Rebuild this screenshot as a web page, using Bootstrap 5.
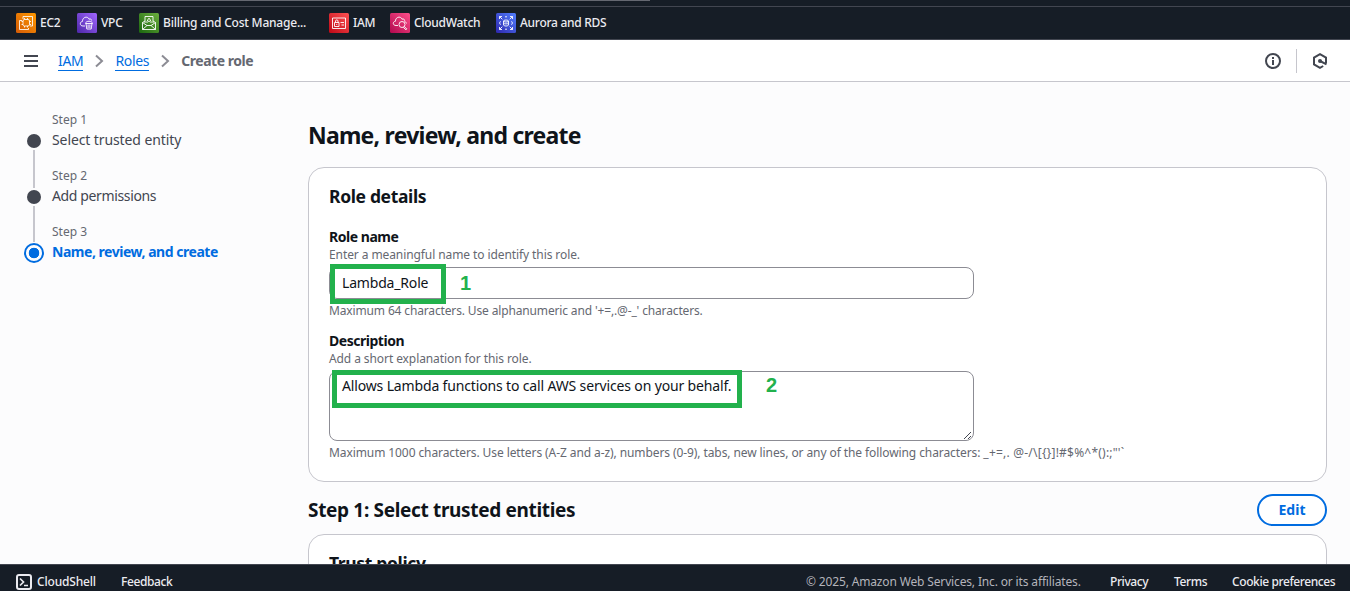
<!DOCTYPE html>
<html lang="en">
<head>
<meta charset="utf-8">
<title>Create role | IAM</title>
<meta name="viewport" content="width=device-width, initial-scale=1">
<link href="https://cdn.jsdelivr.net/npm/bootstrap@5.3.0/dist/css/bootstrap.min.css" rel="stylesheet">
<style>
body{font-family:"Noto Sans","Open Sans",sans-serif;font-size:14px;line-height:20px;color:#0f141a;background:#fcfcfd;height:591px;overflow:hidden}
h1,h2,h3{margin:0;font-weight:700;color:#0f141a}
.topstrip{height:7px;background:#161d26;border-bottom:1px solid #424650}
.searchedge{width:530px;height:1px;margin-left:120px;background:#656871}
.favbar{height:33px;background:#161d26;border-bottom:1px solid #424650;padding-left:16px;color:#ebebf0;font-size:12px;font-weight:500;line-height:16px}
.favbar a,.footbar a{color:inherit;text-decoration:none;white-space:nowrap}
.favbar svg{width:20px;height:20px;margin-right:4px;flex:none}
.favbar a{letter-spacing:-.28px}
.favbar .t-bill{letter-spacing:-.22px}
.crumbbar{height:42px;background:#fff;border-bottom:1px solid #c6c6cd;padding:0 22px 0 24px}
.crumbbar .breadcrumb-link{color:#006ce0;text-decoration:none;border-bottom:1px solid #006ce0;line-height:18px;letter-spacing:-.33px;margin-top:2px}
.crumb-now{color:#656871;font-weight:700;letter-spacing:-.45px;padding-top:1px}
.vrule{width:1px;height:24px;background:#c6c6cd}
.page{height:482px;overflow:hidden}
.steps{width:308px;padding:28px 0 0 24px;flex:none}
.step{display:grid;grid-template-columns:20px 1fr;column-gap:8px;height:56px;grid-template-rows:20px 22px 14px}
.step small{grid-column:2;font-size:12px;line-height:20px;color:#656871}
.step .dot{grid-column:1;grid-row:2;width:14px;height:14px;border-radius:50%;background:#424650;align-self:center;justify-self:center}
.step .name{grid-column:2;grid-row:2;line-height:20px;color:#424650;white-space:nowrap;letter-spacing:-.1px}
.step .name.t-add{letter-spacing:-.37px}
.step .rail{width:2px;background:#c6c6cd;justify-self:center;height:38px;grid-column:1;grid-row:3;margin-top:-2px}
.step.now .name{color:#006ce0;font-weight:700;letter-spacing:-.47px}
.step.now .dot{width:20px;height:20px;border:2px solid #006ce0;background:radial-gradient(circle,#006ce0 5px,#fcfcfd 5.6px)}
.content{width:1019px;flex:none}
h1{font-size:23px;line-height:30px;padding-top:38px;letter-spacing:-.76px}
.panel{background:#fff;border:1px solid #c6c6cd;border-radius:16px;padding:0 20px}
.panel h2{font-size:17.5px;line-height:22px;letter-spacing:-.35px}
h2.sec{font-size:19px;line-height:24px;letter-spacing:-.33px}
.lbl{font-weight:700;line-height:20px;letter-spacing:-.47px}
.hint{font-size:12px;line-height:16px;color:#656871;white-space:nowrap;letter-spacing:-.09px}
.t-max{letter-spacing:-.145px}
.t-sym{letter-spacing:.22px}
.t-desc{letter-spacing:-.15px}
.t-role{letter-spacing:-.18px}
.field{width:645px;border:1px solid #8c8c94;border-radius:8px;padding:5px 12px;background:#fff;position:relative}
.mark-box{position:absolute;border:5px solid #22b14c}
.mark-num{position:absolute;font:700 20px/20px "Liberation Sans",sans-serif;color:#22b14c}
.grip{position:absolute;right:0;bottom:0;width:10px;height:10px}
.editbtn{width:70px;height:32px;border:2px solid #006ce0;border-radius:20px;color:#006ce0;background:#fff;font-weight:700;font-size:14px;padding:0;line-height:20px}
.footbar{height:27px;background:#161d26;border-top:1px solid #424650;color:#ebebf0;font-size:12px;line-height:16px;padding:9px 15px 0 16px;font-weight:500;white-space:nowrap;letter-spacing:-.4px}
.footbar svg{margin-right:5px}
.footbar .t-shell{letter-spacing:-.18px}
.copy{color:#b4b4bb;font-weight:400;letter-spacing:-.15px}
</style>
</head>
<body class="d-flex flex-column">
<header>
  <div class="topstrip"><div class="searchedge"></div></div>
  <nav class="favbar d-flex align-items-center">
    <a href="#" class="d-flex align-items-center" style="width:61px"><svg viewBox="0 0 20 20"><defs><linearGradient id="go" x1="0" y1="1" x2="1" y2="0"><stop stop-color="#d45b07"/><stop offset="1" stop-color="#f90"/></linearGradient></defs><rect width="20" height="20" rx="1.5" fill="url(#go)"/><g fill="none" stroke="#fff" stroke-width=".85"><path d="M7 6V3.500h9.500V13H14M6 7.500H3.500v9h9V15"/><rect x="7" y="6.500" width="6.500" height="6.500" rx="1.500"/><path d="M8.500 5v1.500M11.500 5v1.500M8.500 13v1.500M11.500 13v1.500M13.500 8.500H15M13.500 11.500H15M5.500 8.500H7M5.500 11.500H7"/></g></svg><span>EC2</span></a>
    <a href="#" class="d-flex align-items-center" style="width:62px"><svg viewBox="0 0 20 20"><defs><linearGradient id="gv" x1="0" y1="1" x2="1" y2="0"><stop stop-color="#4d27a8"/><stop offset="1" stop-color="#a166ff"/></linearGradient></defs><rect width="20" height="20" rx="1.500" fill="url(#gv)"/><g fill="none" stroke="#fff" stroke-width=".9"><path d="M8 13H6C2.500 13 2.500 8.800 5.500 8.400 5.300 3.800 11 2.800 12 6.200c1.600-.8 2.600.2 2.700 1.400"/><path d="M9 10.500l.8 5.500h4.400l.8-5.500M11.100 11.500v3.500M12.900 11.500v3.500M8.500 10.500h7c0-3-7-3-7 0z"/></g></svg><span>VPC</span></a>
    <a href="#" class="d-flex align-items-center" style="width:190px"><svg viewBox="0 0 20 20"><defs><linearGradient id="gb" x1="0" y1="1" x2="1" y2="0"><stop stop-color="#1b660f"/><stop offset="1" stop-color="#6cae3e"/></linearGradient></defs><rect width="20" height="20" rx="1.500" fill="url(#gb)"/><g fill="none" stroke="#fff" stroke-width=".9"><path d="M6 10V3.500h8V10M6 8 3.500 9.500v7h13v-7L14 8M3.500 9.500 8 12.500h4l4.500-3M3.500 16.500l4.500-4M16.500 16.500l-4.500-4"/><path d="M8 10V8.500l1.500-3h1l1.500 3V10M9 8.300h2"/></g></svg><span class="t-bill">Billing and Cost Manage...</span></a>
    <a href="#" class="d-flex align-items-center" style="width:61px"><svg viewBox="0 0 20 20"><defs><linearGradient id="gi" x1="0" y1="1" x2="1" y2="0"><stop stop-color="#bd0816"/><stop offset="1" stop-color="#ff5252"/></linearGradient></defs><rect width="20" height="20" rx="1.500" fill="url(#gi)"/><g fill="none" stroke="#fff" stroke-width=".9"><path d="M3.500 5h13v10.500h-13zM5.500 9.500h4.500v4H5.500zM6.500 9.500V8c0-1.500 2.500-1.500 2.500 0v1.500M7.750 11v1M11.500 9.500h3.500M12.500 12h2.500"/></g></svg><span>IAM</span></a>
    <a href="#" class="d-flex align-items-center" style="width:106px"><svg viewBox="0 0 20 20"><defs><linearGradient id="gc" x1="0" y1="1" x2="1" y2="0"><stop stop-color="#b0084d"/><stop offset="1" stop-color="#ff4f8b"/></linearGradient></defs><rect width="20" height="20" rx="1.500" fill="url(#gc)"/><g fill="none" stroke="#fff" stroke-width=".9"><path d="M8 12.500H6C2.500 12.500 2.500 8.500 5.500 8.200 5.300 3.800 11 2.800 12 6.200c1.600-.8 2.600.2 2.700 1.600"/><circle cx="12" cy="11.500" r="3"/><path d="M14.200 13.500l2.600 2.300-.8 1-2.700-2.400M14.500 8.500c1 .2 1.800.8 1.900 2"/></g></svg><span class="t-cw">CloudWatch</span></a>
    <a href="#" class="d-flex align-items-center"><svg viewBox="0 0 20 20"><defs><linearGradient id="gr" x1="0" y1="1" x2="1" y2="0"><stop stop-color="#2e27ad"/><stop offset="1" stop-color="#527fff"/></linearGradient></defs><rect width="20" height="20" rx="1.500" fill="url(#gr)"/><g fill="none" stroke="#fff" stroke-width=".9"><path d="M3.500 6V3.500H6M3.500 3.500l2.800 2.800M14 3.500h2.500V6M16.500 3.500l-2.800 2.800M3.500 14v2.500H6M3.500 16.500l2.800-2.800M14 16.500h2.500V14M16.500 16.500l-2.800-2.800M4.500 8.300L3.500 10l1 1.700M15.500 8.300l1 1.700-1 1.700M9 3.800h2M9 16.200h2"/><ellipse cx="10" cy="8" rx="2.500" ry="1"/><path d="M7.500 8v4c0 1.400 5 1.400 5 0V8M7.500 10c0 1.200 5 1.200 5 0"/></g></svg><span class="t-rds">Aurora and RDS</span></a>
  </nav>
  <div class="crumbbar d-flex align-items-center">
    <svg width="14" height="12" viewBox="0 0 14 12"><path d="M0 1h14M0 6h14M0 11h14" stroke="#424650" stroke-width="2"/></svg>
    <nav class="d-flex align-items-center" style="margin-left:20px">
      <a class="breadcrumb-link" href="#">IAM</a>
      <svg class="chev" width="32" height="16" viewBox="0 0 32 16"><path d="M13 2.500l6 5.500-6 5.500" fill="none" stroke="#8c8c94" stroke-width="2"/></svg>
      <a class="breadcrumb-link t-roles" href="#">Roles</a>
      <svg class="chev" width="32" height="16" viewBox="0 0 32 16"><path d="M13 2.500l6 5.500-6 5.500" fill="none" stroke="#8c8c94" stroke-width="2"/></svg>
      <span class="crumb-now">Create role</span>
    </nav>
    <div class="ms-auto d-flex align-items-center">
      <svg width="16" height="16" viewBox="0 0 16 16"><circle cx="8" cy="8" r="7" fill="none" stroke="#424650" stroke-width="2"/><rect x="7" y="4" width="2" height="2" fill="#424650"/><path d="M7 7h2v5H7z" fill="#424650"/></svg>
      <div class="vrule" style="margin:0 15px 0 15px"></div>
      <svg width="16" height="16" viewBox="0 0 16 16"><path d="M14 10.300V4.600L8 1.200 2 4.600v6.800L8 14.800l3.200-1.800" fill="none" stroke="#424650" stroke-width="2"/><circle cx="8" cy="8" r="2" fill="#424650"/><path d="M8 8l6.500 3.400" stroke="#424650" stroke-width="2"/></svg>
    </div>
  </div>
</header>
<main class="page d-flex">
  <aside class="steps">
    <div class="step"><small>Step 1</small><span class="dot"></span><span class="name">Select trusted entity</span><span class="rail"></span></div>
    <div class="step"><small>Step 2</small><span class="dot"></span><span class="name t-add">Add permissions</span><span class="rail" style="height:36px"></span></div>
    <div class="step now"><small>Step 3</small><span class="dot"></span><span class="name">Name, review, and create</span></div>
  </aside>
  <section class="content">
    <h1>Name, review, and create</h1>
    <div class="panel" style="margin-top:17px;height:315px">
      <h2 style="padding-top:17px">Role details</h2>
      <div class="lbl" style="margin-top:20px">Role name</div>
      <div class="hint">Enter a meaningful name to identify this role.</div>
      <div class="field" style="height:32px;margin-top:4px"><span class="t-role">Lambda_Role</span>
        <div class="mark-box" style="left:0;top:-4px;width:116px;height:40px"></div><span class="mark-num" style="left:130px;top:5px">1</span></div>
      <div class="hint t-max" style="margin-top:4px">Maximum 64 characters. Use alphanumeric and '+=,.@-_' characters.</div>
      <div class="lbl" style="margin-top:12px">Description</div>
      <div class="hint">Add a short explanation for this role.</div>
      <div class="field" style="height:70px;margin-top:4px;padding-top:4px"><span class="t-desc">Allows Lambda functions to call AWS services on your behalf.</span>
        <div class="mark-box" style="left:2px;top:-2px;width:410px;height:38px"></div><span class="mark-num" style="left:436px;top:3px">2</span>
        <svg class="grip" viewBox="0 0 10 10"><path d="M1 9L8 2M5 9l3-3" stroke="#424650" stroke-width="1"/></svg></div>
      <div class="hint" style="margin-top:4px">Maximum 1000 characters. Use letters (A-Z and a-z), numbers (0-9), tabs, new lines, or any of the following characters: <span class="t-sym">_+=,. @-/\[{}]!#$%^*():;"'`</span></div>
    </div>
    <div class="d-flex justify-content-between align-items-center" style="height:32px;margin-top:12px">
      <h2 class="sec">Step 1: Select trusted entities</h2>
      <button class="editbtn">Edit</button>
    </div>
    <div class="panel" style="margin-top:8px;height:90px"><h2 style="padding-top:17px">Trust policy</h2></div>
  </section>
</main>
<footer class="footbar d-flex">
  <svg width="16" height="16" viewBox="0 0 16 16"><rect x="1" y="1" width="14" height="14" rx="2" fill="none" stroke="#ebebf0" stroke-width="2"/><path d="M4 4.500L7.500 8 4 11.500M8 11.500h4" fill="none" stroke="#ebebf0" stroke-width="1.700"/></svg>
  <a href="#" class="t-shell" style="width:84px">CloudShell</a><a href="#">Feedback</a>
  <span class="copy ms-auto" style="width:304px">© 2025, Amazon Web Services, Inc. or its affiliates.</span>
  <a href="#" style="width:64px">Privacy</a><a href="#" style="width:58px">Terms</a><a href="#" style="width:103px">Cookie preferences</a>
</footer>
<script src="https://cdn.jsdelivr.net/npm/bootstrap@5.3.0/dist/js/bootstrap.bundle.min.js"></script>
</body>
</html>
